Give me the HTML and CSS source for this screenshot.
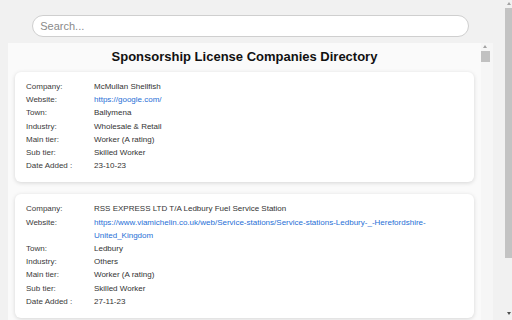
FILE: index.html
```html
<!DOCTYPE html>
<html lang="en">
<head>
  <meta charset="UTF-8" />
  <meta name="viewport" content="width=device-width, initial-scale=1.0"/>
  <title>Sponsorship License Companies Directory</title>
  <link rel="stylesheet" href="styles.css">
</head>
<body>

  <div class="page">
    <div class="wrap">
      <input type="text" id="searchInput" class="search" placeholder="Search...">

      <div class="panel">
        <div class="panel-body">
          <h2>Sponsorship License Companies Directory</h2>

          <div class="card">
            <div class="label">Company:</div><div class="value">McMullan Shellfish</div>
            <div class="label">Website:</div><div class="value"><a href="#">https://google.com/</a></div>
            <div class="label">Town:</div><div class="value">Ballymena</div>
            <div class="label">Industry:</div><div class="value">Wholesale &amp; Retail</div>
            <div class="label">Main tier:</div><div class="value">Worker (A rating)</div>
            <div class="label">Sub tier:</div><div class="value">Skilled Worker</div>
            <div class="label">Date Added :</div><div class="value">23-10-23</div>
          </div>

          <div class="card">
            <div class="label">Company:</div><div class="value">RSS EXPRESS LTD T/A Ledbury Fuel Service Station</div>
            <div class="label">Website:</div><div class="value"><a href="#">https://www.viamichelin.co.uk/web/Service-stations/Service-stations-Ledbury-_-Herefordshire-United_Kingdom</a></div>
            <div class="label">Town:</div><div class="value">Ledbury</div>
            <div class="label">Industry:</div><div class="value">Others</div>
            <div class="label">Main tier:</div><div class="value">Worker (A rating)</div>
            <div class="label">Sub tier:</div><div class="value">Skilled Worker</div>
            <div class="label">Date Added :</div><div class="value">27-11-23</div>
          </div>
        </div>

        <!-- inner list scrollbar -->
        <div class="scrollbar inner">
          <span class="arrow up"></span>
          <span class="thumb"></span>
        </div>
      </div>
    </div>
  </div>

  <!-- page scrollbar -->
  <div class="scrollbar outer">
    <span class="arrow up"></span>
    <span class="thumb"></span>
    <span class="spacer"></span>
    <span class="arrow down"></span>
  </div>

</body>
</html>
```

FILE: styles.css
```css
body {
  margin: 0;
  height: 320px;
  overflow: hidden;
  display: flex;
  background: #f1f1f1;
  font-family: "Liberation Sans", Arial, sans-serif;
}

.page {
  flex: 1;
  overflow: hidden;
}

.wrap {
  width: 485px;
  margin: 0 8px;
  padding-top: 15px;
}

.search {
  display: block;
  width: 90%;
  height: 22px;
  margin: 0 auto 6px;
  padding: 0 7px;
  border: 1px solid #cfcfcf;
  border-radius: 11px;
  box-sizing: border-box;
  background: #ffffff;
  font-family: "Liberation Sans", Arial, sans-serif;
  font-size: 11px;
  color: #333;
  outline: none;
}

.search::placeholder {
  color: #8a8a8a;
}

.panel {
  display: flex;
  height: 340px;
  background: #fafafa;
}

.panel-body {
  flex: 1;
  padding: 6px 7px 0;
  overflow: hidden;
}

h2 {
  text-align: center;
  font-size: 13px;
  line-height: 16px;
  margin: 0 0 7px;
  color: #111;
}

.card {
  display: grid;
  grid-template-columns: 68px 1fr;
  background: #ffffff;
  border-radius: 6px;
  box-shadow: 0 1px 4px rgba(0,0,0,0.15);
  padding: 8px 11px 10px;
  margin-bottom: 12px;
  font-size: 8px;
  line-height: 13.2px;
}

.label {
  color: #3a3a3a;
}

.value {
  color: #333;
}

.value a {
  color: #1f6fd6;
  text-decoration: none;
}

/* fake scrollbars */
.scrollbar {
  display: flex;
  flex-direction: column;
  align-items: center;
  flex-shrink: 0;
}

.scrollbar .arrow {
  width: 0;
  height: 0;
  border-left: 2.5px solid transparent;
  border-right: 2.5px solid transparent;
}

.scrollbar .arrow.up {
  border-bottom: 3px solid #a3a3a3;
}

.scrollbar .arrow.down {
  border-top: 3px solid #505050;
}

.scrollbar.inner {
  width: 12px;
  height: 383px;
  margin-top: -43px;
  padding-top: 45px;
  box-sizing: border-box;
  background: linear-gradient(#f1f1f1 0, #f1f1f1 43px, #f6f6f6 43px);
  align-items: flex-start;
}

.scrollbar.inner .arrow {
  margin-left: 2px;
}

.scrollbar.inner .thumb {
  width: 9px;
  height: 11px;
  margin-top: 3px;
  background: #c1c1c1;
}

.scrollbar.outer {
  width: 7px;
  padding: 2px 0 5px;
  box-sizing: border-box;
  background: #f1f1f1;
}

.scrollbar.outer .thumb {
  width: 7px;
  height: 250px;
  margin-top: 3px;
  background: #c3c3c3;
}

.scrollbar.outer .spacer {
  flex: 1;
}
```
